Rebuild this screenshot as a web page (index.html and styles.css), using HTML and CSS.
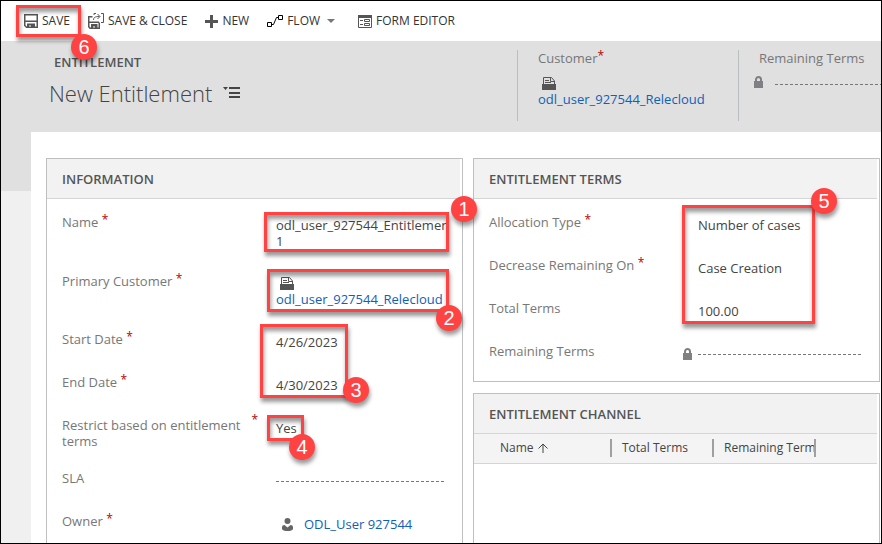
FILE: index.html
```html
<!DOCTYPE html>
<html lang="en">
<head>
<meta charset="utf-8">
<title>New Entitlement</title>
<link rel="stylesheet" href="styles.css">
</head>
<body>
<svg class="sprite" aria-hidden="true">
  <symbol id="i-card" viewBox="0 0 14 14">
    <path fill="currentColor" d="M0 7h14v6H0z"/>
    <path fill="none" stroke="currentColor" d="M1.500 7V.5H9.500L12.500 4V7M3 3.500h4M3 5.500h6M8.500 1v3.500h4"/>
  </symbol>
  <symbol id="i-lock" viewBox="0 0 9 12">
    <path fill="none" stroke="currentColor" stroke-width="2" d="M2 6V3.500a2.500 2.500 0 0 1 5 0V6"/>
    <path fill="currentColor" d="M0 5h9v7H0z"/>
  </symbol>
</svg>
<div class="frame">
  <nav class="toolbar" aria-label="Commands">
    <button class="command" type="button">
      <svg class="icon" width="14" height="14" viewBox="0 0 14 14"><path fill="none" stroke="currentColor" stroke-width="1.500" d="M.75.75h12.500v12.500H2.500L.75 11.500zM1 7.250h12"/><path fill="currentColor" d="M3 9.500h8V14H7v-2.500H5V14H3z"/></svg>SAVE
      <span class="callout callout-save"><b class="pin">6</b></span>
    </button>
    <button class="command" type="button">
      <svg class="icon" width="16" height="16" viewBox="0 0 16 16"><path fill="none" stroke="currentColor" stroke-width="1.500" d="M4.500 3.750H.75v10L2 15.250h9.250V9.500M1 9.250h10"/><path fill="currentColor" d="M3 11h6.500v5H7v-2.500H5V16H3z"/><path fill="none" stroke="currentColor" d="M6 2V.5H8M13 .5h2.500v9H13M5.500 7c0-2.500 1.500-3.500 6-3.500M9.500 1l2.500 2.500L9.500 6"/></svg>SAVE &amp; CLOSE
    </button>
    <button class="command" type="button">
      <svg class="icon" width="13" height="13" viewBox="0 0 13 13"><path stroke="currentColor" stroke-width="3" d="M6.500 0v13M0 6.500h13"/></svg>NEW
    </button>
    <button class="command" type="button">
      <svg class="icon icon-dark" width="16" height="12" viewBox="0 0 16 12"><path fill="none" stroke="currentColor" d="M.5 7.500h4v4h-4zM11.500.5h4v4h-4zM4.500 9.500h2l3-7h2"/></svg>FLOW
      <svg class="caret" width="8" height="4" viewBox="0 0 8 4"><path fill="currentColor" d="M0 0h8L4 4z"/></svg>
    </button>
    <button class="command" type="button">
      <svg class="icon" width="14" height="13" viewBox="0 0 14 13"><path fill="currentColor" d="M0 0h14v3H0z"/><path fill="none" stroke="currentColor" d="M.5.5h13v12H.5zM2 5.500h3M2 9.500h3M6.500 4.500h5v2h-5zM6.500 8.500h5v2h-5z"/></svg>FORM EDITOR
    </button>
  </nav>

  <header class="record">
    <div class="record-name">
      <p class="entity">ENTITLEMENT</p>
      <h1 class="title">New Entitlement
        <svg width="17" height="12" viewBox="0 0 17 12"><path fill="currentColor" d="M0 0h5L2.500 3zM6 0h11v2H6zM6 5h11v2H6zM6 9h11v2H6z"/></svg>
      </h1>
    </div>
    <div class="summary">
      <p class="summary-label">Customer<span class="required">*</span></p>
      <svg class="card" width="14" height="14"><use href="#i-card"/></svg>
      <a class="link" href="#">odl_user_927544_Relecloud</a>
    </div>
    <div class="summary">
      <p class="summary-label">Remaining Terms</p>
      <div class="summary-locked">
        <svg class="lock" width="9" height="12"><use href="#i-lock"/></svg>
        <span class="blank"></span>
      </div>
    </div>
  </header>

  <div class="workspace">
    <div class="gutter"></div>
    <main class="form">
      <section class="panel panel-open">
        <h2 class="panel-title">INFORMATION</h2>
        <dl class="fields">
          <dt>Name <span class="required">*</span></dt>
          <dd><span class="clip">odl_user_927544_Entitlement 1</span><span class="callout callout-name"><b class="pin">1</b></span></dd>
          <dt>Primary Customer <span class="required">*</span></dt>
          <dd><svg class="card" width="14" height="14"><use href="#i-card"/></svg><a class="link clip" href="#">odl_user_927544_Relecloud</a><span class="callout callout-customer"><b class="pin">2</b></span></dd>
          <dt>Start Date <span class="required">*</span></dt>
          <dd>4/26/2023<span class="callout callout-dates"><b class="pin">3</b></span></dd>
          <dt>End Date <span class="required">*</span></dt>
          <dd>4/30/2023</dd>
          <dt class="wrapped"><span>Restrict based on entitlement terms</span><span class="required">*</span></dt>
          <dd>Yes<span class="callout callout-restrict"><b class="pin">4</b></span></dd>
          <dt>SLA</dt>
          <dd class="value-row"><span class="blank"></span></dd>
          <dt>Owner <span class="required">*</span></dt>
          <dd class="value-row owner"><svg class="person" width="11" height="13" viewBox="0 0 11 13"><circle cx="5.500" cy="3" r="3" fill="currentColor"/><path fill="currentColor" d="M0 9q0-2 2.500-2l3 2.500L8.500 7Q11 7 11 9v2q-1 2-5.500 2T0 11z"/></svg><a class="link" href="#">ODL_User 927544</a></dd>
        </dl>
      </section>

      <div class="column">
        <section class="panel">
          <h2 class="panel-title">ENTITLEMENT TERMS</h2>
          <dl class="fields fields-terms">
            <dt>Allocation Type <span class="required">*</span></dt>
            <dd>Number of cases<span class="callout callout-terms"><b class="pin">5</b></span></dd>
            <dt>Decrease Remaining On <span class="required">*</span></dt>
            <dd>Case Creation</dd>
            <dt>Total Terms</dt>
            <dd>100.00</dd>
            <dt>Remaining Terms</dt>
            <dd class="value-row locked"><svg class="lock" width="9" height="12"><use href="#i-lock"/></svg><span class="blank"></span></dd>
          </dl>
        </section>
        <section class="panel panel-open">
          <h2 class="panel-title">ENTITLEMENT CHANNEL</h2>
          <table class="grid">
            <thead>
              <tr>
                <th class="col-name" scope="col"><span>Name <svg width="10" height="10" viewBox="0 0 10 10"><path fill="none" stroke="currentColor" d="M5 10V1M.5 5.500L5 1l4.500 4.500"/></svg></span></th>
                <th class="col-terms" scope="col"><span>Total Terms</span></th>
                <th class="col-terms" scope="col"><span>Remaining Terms</span></th>
                <td></td>
              </tr>
            </thead>
          </table>
        </section>
      </div>
    </main>
  </div>
</div>
</body>
</html>
```
FILE: styles.css
```css
* { box-sizing: border-box; }

body {
  margin: 0;
  font: 13px/16px "Open Sans", "Noto Sans", sans-serif;
  color: #444;
}

p, h1, h2, dl, dd { margin: 0; }
svg { display: block; flex: none; }
.sprite { display: none; }

.frame {
  display: flex;
  flex-direction: column;
  height: 100vh;
  border: 1px solid #000;
  overflow: hidden;
  background: #fff;
}

/* Command bar */
.toolbar {
  display: flex;
  gap: 18px;
  flex: none;
  height: 40px;
  padding: 0 23px;
}

.command {
  position: relative;
  display: flex;
  align-items: center;
  gap: 4px;
  padding: 0;
  border: 0;
  background: none;
  font: 12px/16px "Open Sans", "Noto Sans", sans-serif;
  color: #333;
  white-space: nowrap;
}

.icon { color: #555; }
.icon-dark { color: #000; }
.caret { margin: 0 5px 0 3px; color: #777; }

/* Record header */
.record {
  display: flex;
  flex: none;
  height: 91px;
  padding-top: 9px;
  background: #e0e0e0;
}

.record-name { flex: 0 0 516px; padding-left: 48px; }
.entity { padding: 4px 5px; font-weight: 600; color: #555; }

.title {
  display: flex;
  align-items: center;
  gap: 11px;
  margin-top: 3px;
  font-size: 22px;
  line-height: 32px;
  font-weight: 300;
}

.summary {
  flex: 0 0 221px;
  height: 71px;
  padding-left: 20px;
  border-left: 1px solid #b9bec3;
}

.summary-label { color: #777; }
.summary .card { margin: 11px 4px 0; }
.summary-locked { display: flex; align-items: center; gap: 12px; margin: 10px 0 0 -5px; }
.summary-locked .blank { margin-top: 5px; }

.required {
  position: relative;
  top: -3px;
  color: #b00;
  font-size: 12px;
  line-height: 12px;
}

.link { color: #1160b7; text-decoration: none; }
.card { color: #555; }
.lock { color: #808084; }
.person { color: #666; }

.blank {
  flex: 1;
  height: 1px;
  background: repeating-linear-gradient(90deg, #777 0 3px, transparent 3px 5px);
}

/* Form body */
.workspace { display: flex; flex: 1; min-height: 0; }

.gutter {
  flex: 0 0 30px;
  background: linear-gradient(#e0e0e0 59px, #f0f0f0 59px);
}

.form {
  display: grid;
  grid-template-columns: 417fr 407fr;
  gap: 10px;
  flex: 1;
  min-width: 0;
  min-height: 0;
  padding: 26px 1px 0 15px;
}

.column { display: flex; flex-direction: column; gap: 11px; min-width: 0; }
.panel { min-width: 0; border: 1px solid #bcc0c0; }
.panel-open { border-bottom: 0; }
.column .panel-open { flex: 1; }

.panel-title {
  height: 40px;
  margin-right: 2px;
  padding: 12px 15px;
  border-bottom: 1px solid #d5d5d5;
  background: #f2f2f2;
  font-size: 13px;
  line-height: 16px;
  font-weight: 600;
  color: #555;
}

.fields {
  display: grid;
  grid-template-columns: 214px 1fr;
  align-content: start;
  row-gap: 21px;
  padding: 15px 16px 16px 15px;
}

.fields-terms { grid-template-columns: 209px 1fr; }
dt { color: #777; }
dd { position: relative; min-width: 0; min-height: 22px; padding: 3px 0; }
.wrapped { display: flex; gap: 5px; padding-right: 18px; }
.clip { display: block; overflow: hidden; }
dd .card { margin: 1px 4px 0; }
.value-row { display: flex; align-items: center; }
.owner { gap: 11px; padding-left: 6px; }
.locked { gap: 6px; margin-left: -15px; }

.grid {
  width: calc(100% - 2px);
  border-collapse: collapse;
  table-layout: fixed;
  background: #f4f4f4;
  font-size: 12px;
}

.grid th, .grid td { height: 29px; padding: 0; border-bottom: 1px solid #d5d5d5; }
.grid th { font-weight: 400; text-align: left; }

.grid th span {
  display: flex;
  align-items: center;
  gap: 4px;
  height: 18px;
  padding-left: 10px;
  border-right: 2px solid #a0a0a0;
  overflow: hidden;
  white-space: nowrap;
}

.col-name { width: 138px; }
.grid .col-name span { padding-left: 26px; }
.col-terms { width: 102px; }

/* Numbered callouts lying over the form */
.callout {
  position: absolute;
  z-index: 1;
  border: 3px solid #ff4242;
  box-shadow: 1px 4px 4px #0006, inset 1px 4px 4px #0006;
  pointer-events: none;
}

.pin {
  position: absolute;
  width: 26px;
  height: 26px;
  border-radius: 50%;
  background: #ff4242;
  box-shadow: 1px 4px 4px #0006;
  color: #fff;
  font: 20px/26px "Liberation Sans", sans-serif;
  text-align: center;
}

.callout-save { left: -8px; top: 4px; width: 65px; height: 32px; }
.callout-save .pin { right: -19px; bottom: -26px; }
.callout-name { left: -12px; top: -2px; width: 185px; height: 40px; }
.callout-name .pin { right: -31px; top: -19px; }
.callout-customer { left: -9px; top: -4px; width: 182px; height: 43px; }
.callout-customer .pin { right: -16px; bottom: -22px; }
.callout-dates { left: -16px; top: -7px; width: 88px; height: 74px; }
.callout-dates .pin { right: -24px; bottom: -8px; }
.callout-restrict { left: -9px; top: -2px; width: 37px; height: 26px; }
.callout-restrict .pin { right: -14px; bottom: -22px; }
.callout-terms { left: -16px; top: -9px; width: 133px; height: 119px; }
.callout-terms .pin { right: -25px; top: -20px; }
```
